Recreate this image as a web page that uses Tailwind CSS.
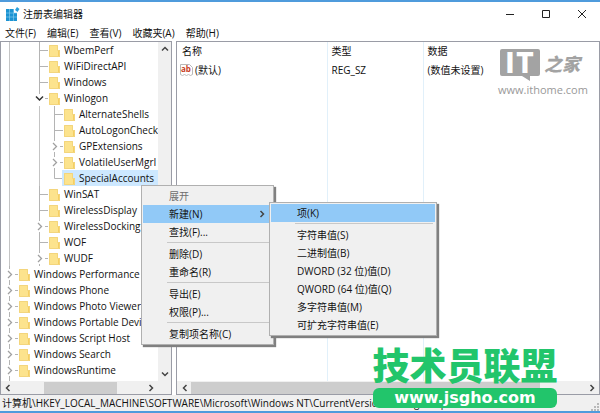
<!DOCTYPE html>
<html lang="zh-CN">
<head>
  <meta charset="UTF-8">
  <meta name="viewport" content="width=device-width, initial-scale=1.0">
  <title>注册表编辑器</title>
  <script src="https://cdn.jsdelivr.net/npm/@tailwindcss/browser@4"></script>
</head>
<body class="relative flex h-screen flex-col overflow-hidden border-t-2 border-b-2 border-[#4f9bdc] bg-white font-['Open_Sans','Noto_Sans_CJK_SC',sans-serif] text-[10px] leading-4 text-[#111]">

  <!-- shared icons -->
  <svg class="hidden">
    <symbol id="folder" viewBox="0 0 11 13">
      <path d="M0 1h9v5h2v7H0z" fill="#fce38d"/>
      <path d="M9 6h2v7H9z" fill="#f6cf62"/>
      <path d="M.5 1.5h8v5h2v6H.5z" fill="none" stroke="#f3d57c"/>
    </symbol>
    <symbol id="branch" viewBox="0 0 14 16">
      <path d="M4.500 0v16M5 8.500h8" fill="none" stroke="#b4b4b4"/>
    </symbol>
    <symbol id="branch-last" viewBox="0 0 14 16">
      <path d="M4.500 0v8.500h8.500" fill="none" stroke="#b4b4b4"/>
    </symbol>
    <symbol id="closed" viewBox="0 0 14 16">
      <path d="M4.500 0v3M4.500 14v2M10 8.500h3" fill="none" stroke="#b4b4b4"/>
      <path d="M3 5l3.500 3.500L3 12" fill="none" stroke="#a0a0a0" stroke-width="1.300"/>
    </symbol>
    <symbol id="opened" viewBox="0 0 14 16">
      <path d="M4.500 0v4M10 8.500h3" fill="none" stroke="#b4b4b4"/>
      <path d="M1 6.500L4.500 10 8 6.500" fill="none" stroke="#333" stroke-width="1.500"/>
    </symbol>
    <symbol id="chevron" viewBox="0 0 8 8">
      <path d="M2.500 1L5.500 4l-3 3" fill="none" stroke="#444" stroke-width="1.500"/>
    </symbol>
  </svg>

  <header class="flex h-[23px] shrink-0 items-center pl-1.5">
    <svg class="size-3.5" viewBox="0 0 14 14">
      <path d="M0 2h8v4h3v8H0z" fill="#1c93d2"/>
      <path d="M0 6h11M0 10h11M3.500 2v12M7.500 2v12" stroke="#8fd0f0" stroke-width=".6"/>
      <path d="M11 0l2.500 2-2 3L9 3z" fill="#2aa0dc"/>
    </svg>
    <h1 class="ml-[3px]">注册表编辑器</h1>
    <div class="ml-auto flex text-[#222]">
      <button class="grid h-5 w-9 place-items-center" aria-label="最小化"><svg class="size-2.5" viewBox="0 0 10 10"><path d="M1 5.500h8" stroke="currentColor"/></svg></button>
      <button class="grid h-5 w-9 place-items-center" aria-label="最大化"><svg class="size-2.5" viewBox="0 0 10 10"><path d="M1.500 1.500h7v7h-7z" fill="none" stroke="currentColor"/></svg></button>
      <button class="grid h-5 w-9 place-items-center" aria-label="关闭"><svg class="size-2.5" viewBox="0 0 10 10"><path d="M1 1l8 8M9 1L1 9" stroke="currentColor"/></svg></button>
    </div>
  </header>

  <nav class="flex h-4 shrink-0 gap-[11px] pl-[5px]">
    <button>文件(F)</button>
    <button>编辑(E)</button>
    <button>查看(V)</button>
    <button>收藏夹(A)</button>
    <button>帮助(H)</button>
  </nav>

  <main class="flex min-h-0 flex-1 gap-1">
    <!-- key tree -->
    <section class="flex w-[172px] shrink-0 flex-col border border-[#9a9ca6]">
      <div class="flex min-h-0 flex-1">
        <ul class="-ml-px min-w-0 flex-1 overflow-hidden whitespace-nowrap [&>li]:flex [&>li]:h-4 [&>li]:items-center">
          <li><i class="ml-[9px] h-4 w-[26px] shrink-0 border-l border-[#c4c4c4]"></i><svg class="h-4 w-3.5 shrink-0"><use href="#branch"/></svg><svg class="mr-1 h-[13px] w-[11px] shrink-0"><use href="#folder"/></svg>WbemPerf</li>
          <li><i class="ml-[9px] h-4 w-[26px] shrink-0 border-l border-[#c4c4c4]"></i><svg class="h-4 w-3.5 shrink-0"><use href="#branch"/></svg><svg class="mr-1 h-[13px] w-[11px] shrink-0"><use href="#folder"/></svg>WiFiDirectAPI</li>
          <li><i class="ml-[9px] h-4 w-[26px] shrink-0 border-l border-[#c4c4c4]"></i><svg class="h-4 w-3.5 shrink-0"><use href="#branch"/></svg><svg class="mr-1 h-[13px] w-[11px] shrink-0"><use href="#folder"/></svg>Windows</li>
          <li><i class="ml-[9px] h-4 w-[26px] shrink-0 border-l border-[#c4c4c4]"></i><svg class="h-4 w-3.5 shrink-0"><use href="#opened"/></svg><svg class="mr-1 h-[13px] w-[11px] shrink-0"><use href="#folder"/></svg>Winlogon</li>
          <li><i class="ml-[9px] h-4 w-[30px] shrink-0 border-l border-[#c4c4c4]"></i><i class="h-4 w-[11px] shrink-0 border-l border-[#c4c4c4]"></i><svg class="h-4 w-3.5 shrink-0"><use href="#branch"/></svg><svg class="mr-1 h-[13px] w-[11px] shrink-0"><use href="#folder"/></svg>AlternateShells</li>
          <li><i class="ml-[9px] h-4 w-[30px] shrink-0 border-l border-[#c4c4c4]"></i><i class="h-4 w-[11px] shrink-0 border-l border-[#c4c4c4]"></i><svg class="h-4 w-3.5 shrink-0"><use href="#branch"/></svg><svg class="mr-1 h-[13px] w-[11px] shrink-0"><use href="#folder"/></svg>AutoLogonCheck</li>
          <li><i class="ml-[9px] h-4 w-[30px] shrink-0 border-l border-[#c4c4c4]"></i><i class="h-4 w-[11px] shrink-0 border-l border-[#c4c4c4]"></i><svg class="h-4 w-3.5 shrink-0"><use href="#closed"/></svg><svg class="mr-1 h-[13px] w-[11px] shrink-0"><use href="#folder"/></svg>GPExtensions</li>
          <li><i class="ml-[9px] h-4 w-[30px] shrink-0 border-l border-[#c4c4c4]"></i><i class="h-4 w-[11px] shrink-0 border-l border-[#c4c4c4]"></i><svg class="h-4 w-3.5 shrink-0"><use href="#closed"/></svg><svg class="mr-1 h-[13px] w-[11px] shrink-0"><use href="#folder"/></svg>VolatileUserMgrI</li>
          <li><i class="ml-[9px] h-4 w-[30px] shrink-0 border-l border-[#c4c4c4]"></i><i class="h-4 w-[11px] shrink-0 border-l border-[#c4c4c4]"></i><svg class="h-4 w-3 shrink-0" viewBox="0 0 12 16"><use href="#branch-last" width="14" height="16"/></svg><span class="flex h-4 flex-1 items-center bg-[#cde8ff] pl-0.5"><svg class="mr-1 h-[13px] w-[11px] shrink-0"><use href="#folder"/></svg>SpecialAccounts</span></li>
          <li><i class="ml-[9px] h-4 w-[26px] shrink-0 border-l border-[#c4c4c4]"></i><svg class="h-4 w-3.5 shrink-0"><use href="#branch"/></svg><svg class="mr-1 h-[13px] w-[11px] shrink-0"><use href="#folder"/></svg>WinSAT</li>
          <li><i class="ml-[9px] h-4 w-[26px] shrink-0 border-l border-[#c4c4c4]"></i><svg class="h-4 w-3.5 shrink-0"><use href="#branch"/></svg><svg class="mr-1 h-[13px] w-[11px] shrink-0"><use href="#folder"/></svg>WirelessDisplay</li>
          <li><i class="ml-[9px] h-4 w-[26px] shrink-0 border-l border-[#c4c4c4]"></i><svg class="h-4 w-3.5 shrink-0"><use href="#closed"/></svg><svg class="mr-1 h-[13px] w-[11px] shrink-0"><use href="#folder"/></svg>WirelessDocking</li>
          <li><i class="ml-[9px] h-4 w-[26px] shrink-0 border-l border-[#c4c4c4]"></i><svg class="h-4 w-3.5 shrink-0"><use href="#branch"/></svg><svg class="mr-1 h-[13px] w-[11px] shrink-0"><use href="#folder"/></svg>WOF</li>
          <li><i class="ml-[9px] h-4 w-[26px] shrink-0 border-l border-[#c4c4c4]"></i><svg class="h-4 w-3.5 shrink-0"><use href="#closed"/></svg><svg class="mr-1 h-[13px] w-[11px] shrink-0"><use href="#folder"/></svg>WUDF</li>
          <li><svg class="ml-[5px] h-4 w-3.5 shrink-0"><use href="#closed"/></svg><svg class="mr-1 h-[13px] w-[11px] shrink-0"><use href="#folder"/></svg>Windows Performance</li>
          <li><svg class="ml-[5px] h-4 w-3.5 shrink-0"><use href="#closed"/></svg><svg class="mr-1 h-[13px] w-[11px] shrink-0"><use href="#folder"/></svg>Windows Phone</li>
          <li><svg class="ml-[5px] h-4 w-3.5 shrink-0"><use href="#closed"/></svg><svg class="mr-1 h-[13px] w-[11px] shrink-0"><use href="#folder"/></svg>Windows Photo Viewer</li>
          <li><svg class="ml-[5px] h-4 w-3.5 shrink-0"><use href="#closed"/></svg><svg class="mr-1 h-[13px] w-[11px] shrink-0"><use href="#folder"/></svg>Windows Portable Devi</li>
          <li><svg class="ml-[5px] h-4 w-3.5 shrink-0"><use href="#closed"/></svg><svg class="mr-1 h-[13px] w-[11px] shrink-0"><use href="#folder"/></svg>Windows Script Host</li>
          <li><svg class="ml-[5px] h-4 w-3.5 shrink-0"><use href="#closed"/></svg><svg class="mr-1 h-[13px] w-[11px] shrink-0"><use href="#folder"/></svg>Windows Search</li>
          <li><svg class="ml-[5px] h-4 w-3.5 shrink-0"><use href="#closed"/></svg><svg class="mr-1 h-[13px] w-[11px] shrink-0"><use href="#folder"/></svg>WindowsRuntime</li>
          <li><svg class="ml-[5px] h-4 w-3.5 shrink-0"><use href="#closed"/></svg><svg class="mr-1 h-[13px] w-[11px] shrink-0"><use href="#folder"/></svg></li>
        </ul>
        <div class="flex w-[13px] shrink-0 flex-col items-center justify-between bg-[#f0f0f0] py-[3px]">
          <svg class="size-2 -rotate-90"><use href="#chevron"/></svg>
          <svg class="size-2 rotate-90"><use href="#chevron"/></svg>
        </div>
      </div>
      <div class="flex h-[13px] shrink-0 items-center bg-[#f0f0f0] pr-4 pl-[3px]">
        <svg class="size-2 rotate-180"><use href="#chevron"/></svg>
        <div class="ml-8 h-3 w-[73px] bg-[#cdcdcd]"></div>
        <svg class="ml-auto size-2"><use href="#chevron"/></svg>
      </div>
    </section>

    <!-- value list -->
    <section class="flex min-w-0 flex-1 flex-col border border-[#9a9ca6]">
      <div class="flex min-h-0 flex-1">
        <table class="h-full w-full table-fixed text-left">
          <thead>
            <tr class="h-[18px]">
              <th class="w-[150px] border-r border-[#e1f0fa] pl-[5px] font-normal">名称</th>
              <th class="w-24 border-r border-[#e1f0fa] pl-1 font-normal">类型</th>
              <th class="pl-1 font-normal">数据</th>
            </tr>
          </thead>
          <tbody>
            <tr class="h-[19px]">
              <td class="border-r border-[#e1f0fa] pl-[3px]">
                <span class="flex items-center gap-0.5">
                  <svg class="h-3 w-[13px]" viewBox="0 0 13 12">
                    <path d="M.5.500h9l3 3v7l-2 1-2-1-2 1-2-1-2 1-2-1z" fill="#fff" stroke="#b9b9b9"/>
                    <text x="1" y="8" font-size="8" font-weight="bold" fill="#c8401e">ab</text>
                  </svg>
                  (默认)
                </span>
              </td>
              <td class="border-r border-[#e1f0fa] pl-1">REG_SZ</td>
              <td class="pl-1">(数值未设置)</td>
            </tr>
            <tr>
              <td class="border-r border-[#e1f0fa]"></td>
              <td class="border-r border-[#e1f0fa]"></td>
              <td></td>
            </tr>
          </tbody>
        </table>
      </div>
      <div class="flex h-[13px] shrink-0 items-center bg-[#f0f0f0] pr-[3px] pl-1">
        <svg class="size-2 rotate-180"><use href="#chevron"/></svg>
        <div class="ml-0.5 h-3 w-[84%] bg-[#cdcdcd]"></div>
        <svg class="ml-auto size-2"><use href="#chevron"/></svg>
      </div>
    </section>
  </main>

  <footer class="flex h-4 shrink-0 items-center justify-between bg-[#f0f0f0] pr-px pl-0.5 whitespace-nowrap">
    <span>计算机\HKEY_LOCAL_MACHINE\SOFTWARE\Microsoft\Windows NT\CurrentVersion\Winlogon\SpecialAccounts</span>
    <svg class="size-2 self-end" viewBox="0 0 8 8"><path d="M6 0h2v2H6zM3 3h2v2H3zM6 3h2v2H6zM0 6h2v2H0zM3 6h2v2H3zM6 6h2v2H6z" fill="#b8b8b8"/></svg>
  </footer>

  <!-- context menu -->
  <div class="absolute top-[183px] left-[141px] w-[133px] border border-[#b0b0b0] bg-[#f0f0f0] p-px leading-[18px] shadow-[2px_2px_1px_#808080] [&>button]:block [&>button]:h-[18px] [&>button]:w-full [&>button]:pl-[26px] [&>button]:text-left">
    <button class="text-[#6d6d6d]">展开</button>
    <button class="relative bg-[#91c9f7]">新建(N)<svg class="absolute top-[5px] right-1.5 size-2"><use href="#chevron"/></svg></button>
    <button>查找(F)...</button>
    <hr class="my-px mr-0.5 ml-6 h-0.5 border-t-[#c8c8c8]">
    <button>删除(D)</button>
    <button>重命名(R)</button>
    <hr class="my-px mr-0.5 ml-6 h-0.5 border-t-[#c8c8c8]">
    <button>导出(E)</button>
    <button>权限(P)...</button>
    <hr class="my-px mr-0.5 ml-6 h-0.5 border-t-[#c8c8c8]">
    <button>复制项名称(C)</button>
  </div>
  <div class="absolute top-[200px] left-[269px] w-[168px] border border-[#b0b0b0] bg-[#f0f0f0] p-px leading-[18px] shadow-[2px_2px_1px_#808080] [&>button]:block [&>button]:h-[18px] [&>button]:w-full [&>button]:pl-[26px] [&>button]:text-left">
    <button class="bg-[#91c9f7]">项(K)</button>
    <hr class="my-px mr-0.5 ml-6 h-0.5 border-t-[#c8c8c8]">
    <button>字符串值(S)</button>
    <button>二进制值(B)</button>
    <button>DWORD (32 位)值(D)</button>
    <button>QWORD (64 位)值(Q)</button>
    <button>多字符串值(M)</button>
    <button>可扩充字符串值(E)</button>
  </div>

  <!-- site marks -->
  <svg class="absolute top-[44px] right-3 h-[54px] w-[92px]" viewBox="0 0 92 54">
    <path d="M6 3h36q2 0 2 2v23q0 2-2 2h-8v5l-8-5H6q-2 0-2-2V5q0-2 2-2z" fill="#a3a3a3"/>
    <text x="9 20" y="27" class="fill-white font-['Noto_Sans_CJK_SC',sans-serif] text-[28px] font-black">IT</text>
    <text x="48" y="25" class="fill-[#a3a3a3] font-['Noto_Sans_CJK_SC',sans-serif] text-[18px] font-black italic">之家</text>
    <text x="2" y="48" class="fill-[#999] text-[11px]">www.ithome.com</text>
  </svg>
  <div class="absolute right-[43px] bottom-[3px] flex w-[184px] flex-col items-center whitespace-nowrap">
    <strong class="font-['Noto_Sans_CJK_SC',sans-serif] text-[37px] leading-10 font-black text-[#22c56b]">技术员联盟</strong>
    <a href="#" class="mt-1 w-full rounded-md bg-[#22c56b] text-center font-['DejaVu_Sans',sans-serif] text-[16px] leading-5 font-bold text-white">www.jsgho.com</a>
  </div>
</body>
</html>
